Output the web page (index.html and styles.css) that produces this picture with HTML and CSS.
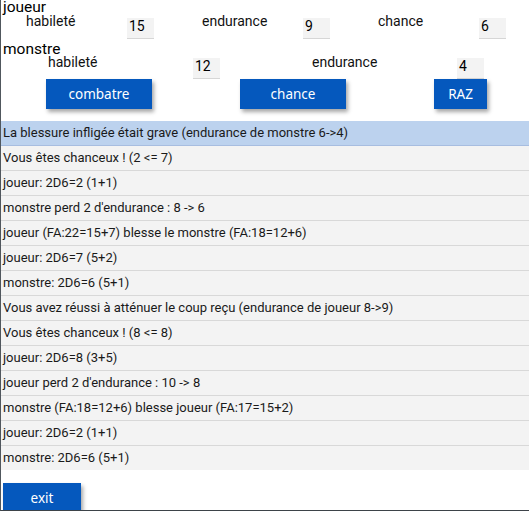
FILE: index.html
```html
<!DOCTYPE html>
<html lang="fr">
<head>
<meta charset="utf-8">
<title>Combat</title>
<link rel="stylesheet" href="styles.css">
</head>
<body>
<div class="frame">
  <div class="heading">joueur</div>
  <div class="stats stats-player">
    <div class="stat"><span class="label">habileté</span><span class="field">15</span></div>
    <div class="stat"><span class="label">endurance</span><span class="field">9</span></div>
    <div class="stat"><span class="label">chance</span><span class="field">6</span></div>
  </div>
  <div class="heading">monstre</div>
  <div class="stats stats-monster">
    <div class="stat"><span class="label">habileté</span><span class="field">12</span></div>
    <div class="stat"><span class="label">endurance</span><span class="field">4</span></div>
  </div>
  <div class="actions">
    <button class="btn btn-wide">combatre</button>
    <button class="btn btn-wide">chance</button>
    <button class="btn btn-small">RAZ</button>
  </div>
  <ul class="log">
    <li class="selected">La blessure infligée était grave (endurance de monstre 6-&gt;4)</li>
    <li>Vous êtes chanceux ! (2 &lt;= 7)</li>
    <li>joueur: 2D6=2 (1+1)</li>
    <li>monstre perd 2 d'endurance : 8 -&gt; 6</li>
    <li>joueur (FA:22=15+7) blesse le monstre (FA:18=12+6)</li>
    <li>joueur: 2D6=7 (5+2)</li>
    <li>monstre: 2D6=6 (5+1)</li>
    <li>Vous avez réussi à atténuer le coup reçu (endurance de joueur 8-&gt;9)</li>
    <li>Vous êtes chanceux ! (8 &lt;= 8)</li>
    <li>joueur: 2D6=8 (3+5)</li>
    <li>joueur perd 2 d'endurance : 10 -&gt; 8</li>
    <li>monstre (FA:18=12+6) blesse joueur (FA:17=15+2)</li>
    <li>joueur: 2D6=2 (1+1)</li>
    <li>monstre: 2D6=6 (5+1)</li>
  </ul>
  <button class="btn btn-exit">exit</button>
</div>
</body>
</html>
```
FILE: styles.css
```css
html, body {
  margin: 0;
  padding: 0;
  background: #ffffff;
}
body {
  font-family: Roboto, "Liberation Sans", sans-serif;
  color: #111;
}
.frame {
  box-sizing: border-box;
  width: 529px;
  height: 511px;
  border-left: 1px solid #50575d;
  border-bottom: 1px solid #3d4349;
  overflow: hidden;
}
.heading {
  font-size: 15.5px;
  line-height: 14px;
  height: 14px;
  padding-left: 2px;
  color: #000;
}
.stats {
  display: flex;
  font-size: 14px;
}
.stat {
  display: flex;
  align-items: flex-start;
}
.label {
  display: block;
  line-height: 16px;
}
.field {
  display: block;
  box-sizing: border-box;
  width: 27px;
  background: #f3f3f3;
  border-bottom: 1px solid #d6d6d6;
  padding: 0 0 0 2px;
  font-size: 14px;
  line-height: 16px;
  color: #000;
}
.stats-player {
  margin-top: -3px;
  height: 31px;
}
.stats-player .stat {
  width: 176px;
}
.stats-player .label {
  margin-top: 2px;
  margin-left: 25px;
  width: 101px;
}
.stats-player .field {
  margin-top: 7px;
  height: 21px;
}
.stats-monster {
  margin-top: -2px;
  height: 25px;
}
.stats-monster .stat {
  width: 264px;
}
.stats-monster .label {
  margin-left: 47px;
  width: 145px;
}
.stats-monster .field {
  margin-top: 4px;
  height: 21px;
}
.actions {
  display: flex;
  gap: 88px;
  padding-left: 45px;
  height: 30px;
}
.btn {
  font-family: "Noto Sans", "Open Sans", sans-serif;
  font-size: 13.5px;
  color: #fff;
  background: #0558bd;
  border: none;
  border-radius: 0;
  padding: 0;
  height: 30px;
  box-shadow: 2px 3px 4px rgba(0, 0, 0, 0.35);
}
.btn-wide {
  width: 106px;
}
.btn-small {
  width: 53px;
}
.log {
  list-style: none;
  margin: 12px 0 0 0;
  padding: 0;
  font-size: 13px;
}
.log li {
  box-sizing: border-box;
  height: 25px;
  line-height: 24px;
  padding-left: 2px;
  background: #f3f3f3;
  border-bottom: 1px solid #d8d8d8;
  color: #1a1a1a;
  white-space: nowrap;
}
.log li.selected {
  background: #bcd2ee;
  border-bottom-color: #a7bde0;
}
.log li:last-child {
  border-bottom: none;
  height: 24px;
}
.btn-exit {
  display: block;
  margin: 13px 0 0 2px;
  width: 78px;
}
```
